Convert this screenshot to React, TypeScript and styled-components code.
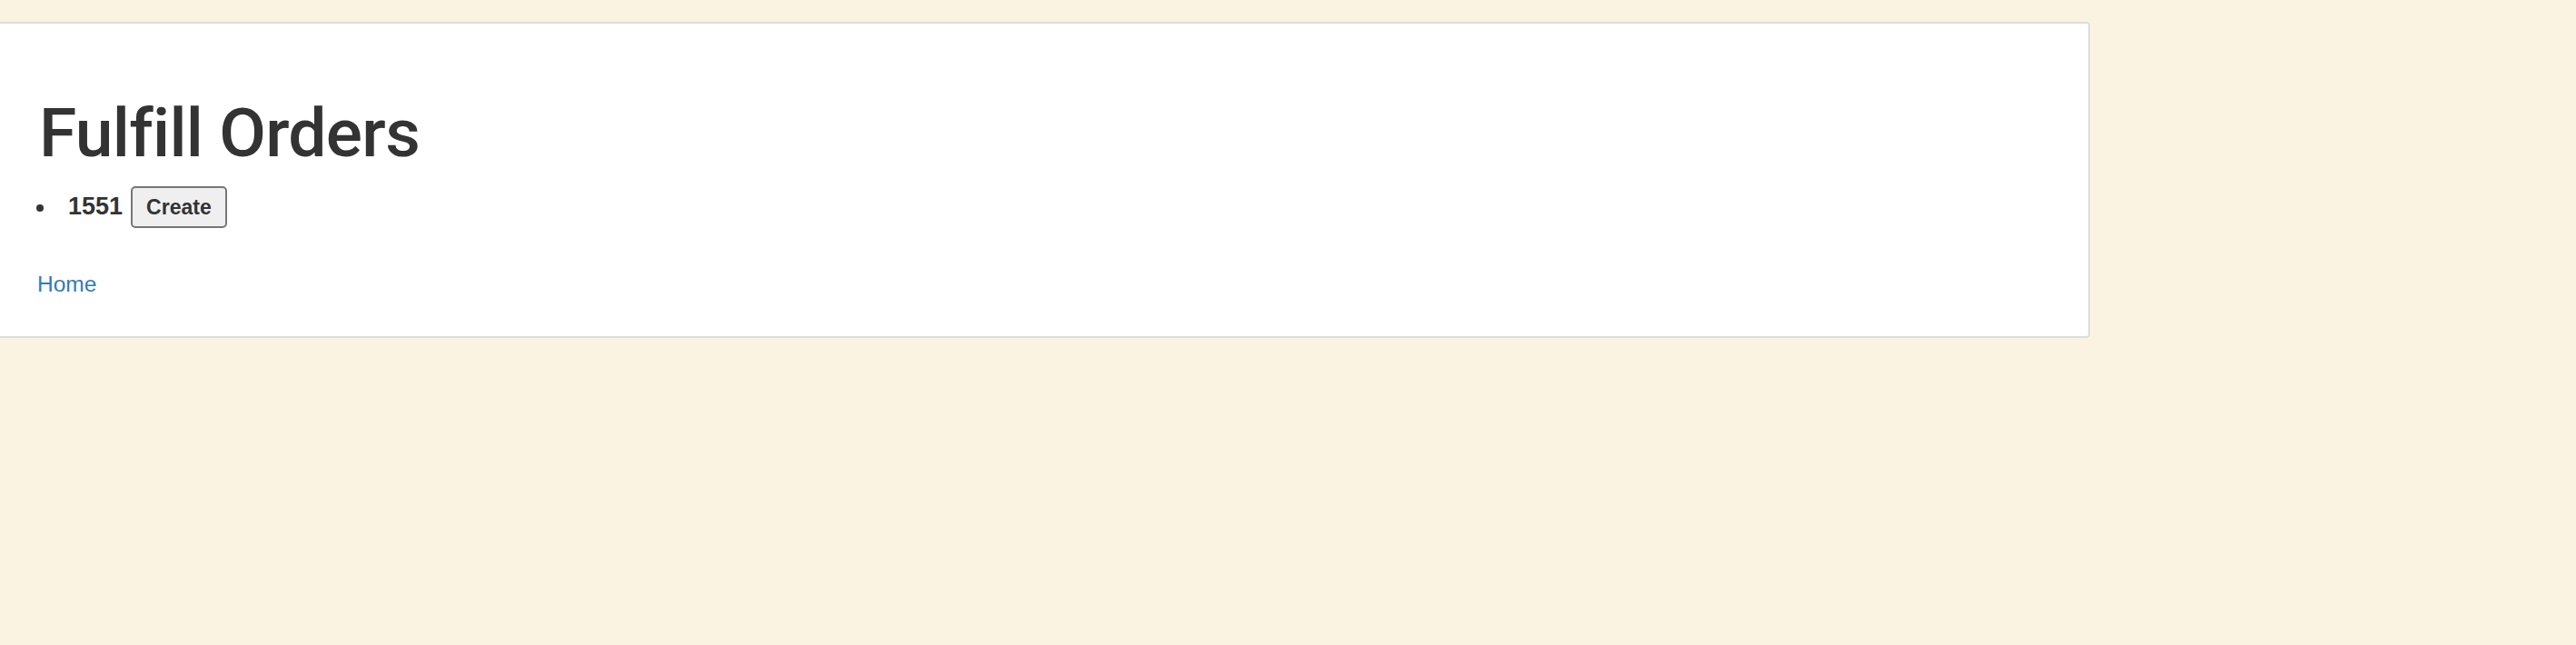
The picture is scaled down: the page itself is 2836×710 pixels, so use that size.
import React from "react";
import styled, { createGlobalStyle } from "styled-components";

const GlobalStyle = createGlobalStyle`
  html, body {
    margin: 0;
    padding: 0;
    background: #fbf3e2;
    font-family: "Liberation Sans", Arial, Helvetica, sans-serif;
    color: #333333;
  }
`;

const Page = styled.div`
  padding-top: 24px;
  min-height: 686px;
`;

const Card = styled.section`
  box-sizing: border-box;
  width: 2304px;
  margin-left: -3px;
  background: #ffffff;
  border: 2px solid #dddddd;
  border-radius: 4px;
  padding: 80px 44px 40px 44px;
`;

const Title = styled.h1`
  margin: 0;
  font-family: Roboto, "Liberation Sans", Arial, sans-serif;
  font-size: 75px;
  line-height: 81px;
  font-weight: 500;
  letter-spacing: -0.7px;
  color: #333333;
`;

const OrderList = styled.ul`
  list-style: none;
  margin: 18px 0 0 0;
  padding: 0;
`;

const OrderItem = styled.li`
  display: flex;
  align-items: baseline;
  gap: 9px;
  position: relative;
  padding-left: 32px;

  &::before {
    content: "";
    position: absolute;
    left: -3px;
    top: 20px;
    width: 8px;
    height: 8px;
    border-radius: 50%;
    background: #333333;
  }
`;

const OrderNumber = styled.strong`
  font-size: 27px;
  font-weight: 700;
`;

const CreateButton = styled.button`
  box-sizing: border-box;
  height: 46px;
  padding: 0 15px;
  font-family: "Liberation Sans", Arial, Helvetica, sans-serif;
  font-size: 23px;
  font-weight: 700;
  color: #333333;
  background: #efefef;
  border: 2px solid #767676;
  border-radius: 5px;
  cursor: pointer;
`;

const Footer = styled.p`
  margin: 44px 0 0 0;
  font-size: 24.5px;
  line-height: 35px;
`;

const HomeLink = styled.a`
  margin-left: -2px;
  color: #337ab7;
  text-decoration: none;
`;

export default function App() {
  return (
    <>
      <GlobalStyle />
      <Page>
        <Card>
          <Title>Fulfill Orders</Title>
          <OrderList>
            <OrderItem>
              <OrderNumber>1551</OrderNumber>
              <CreateButton type="button">Create</CreateButton>
            </OrderItem>
          </OrderList>
          <Footer>
            <HomeLink href="#">Home</HomeLink>
          </Footer>
        </Card>
      </Page>
    </>
  );
}
